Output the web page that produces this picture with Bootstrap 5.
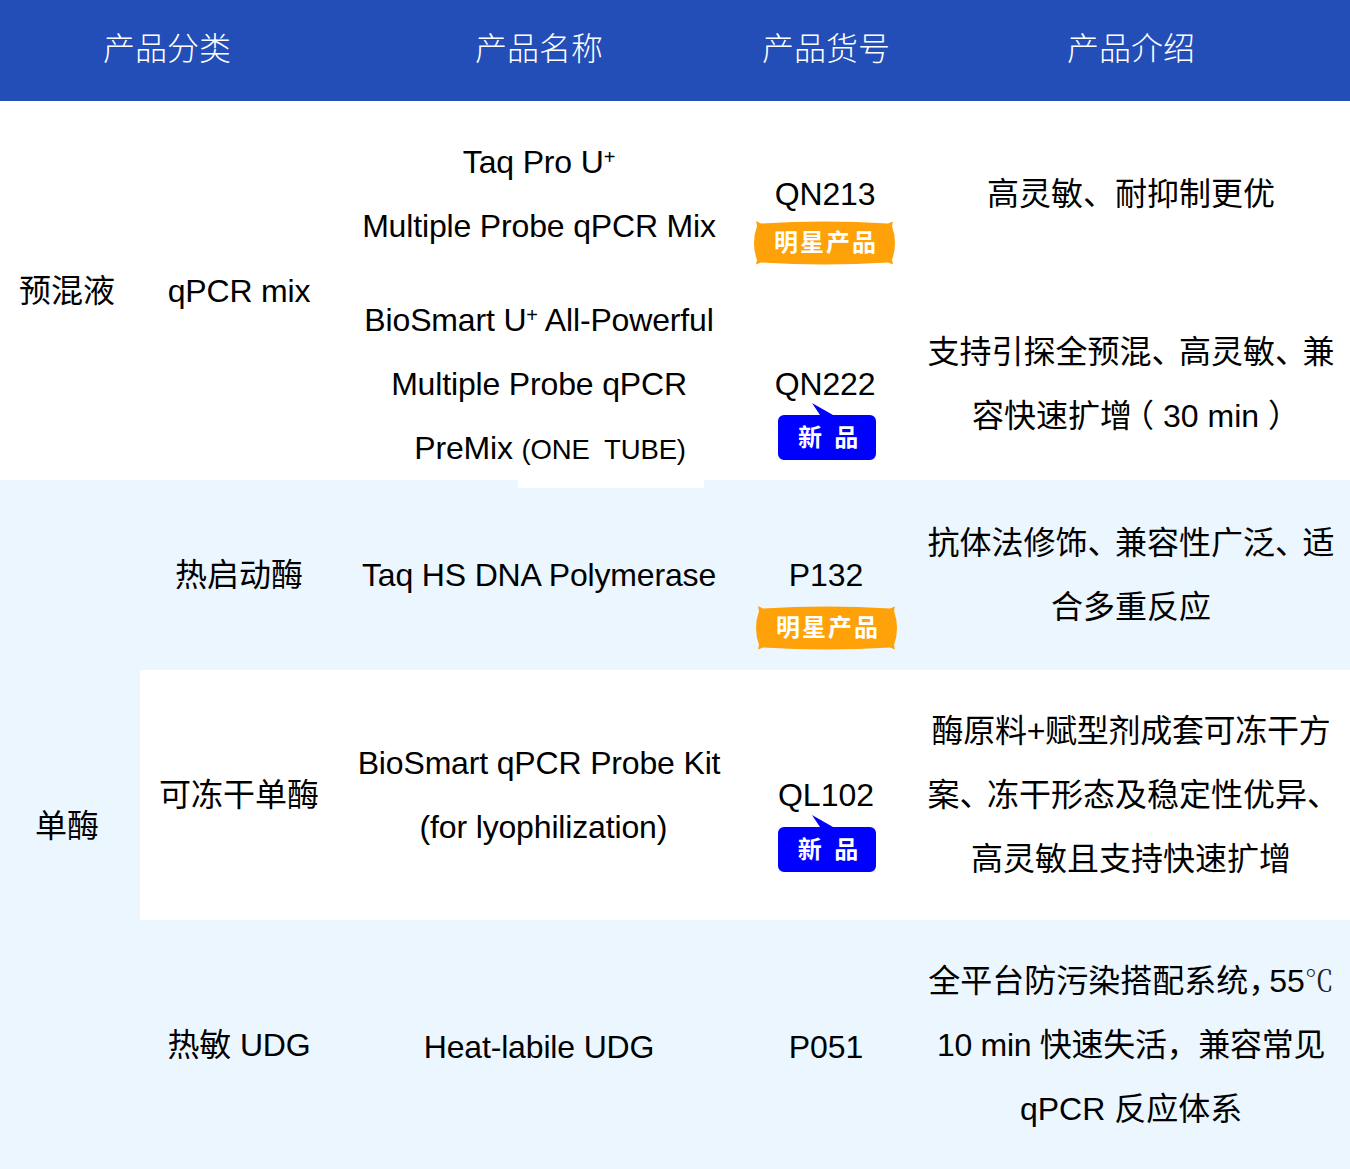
<!DOCTYPE html>
<html lang="zh">
<head>
<meta charset="utf-8">
<title>产品列表</title>
<link rel="stylesheet" href="https://cdn.jsdelivr.net/npm/bootstrap@5.3.0/dist/css/bootstrap.min.css">
<style>
html,body{margin:0;background:#fff}
body{font-family:"Liberation Sans","Noto Sans CJK SC",sans-serif;color:#000}
.ptable{table-layout:fixed;width:1350px;border-collapse:collapse;font-size:32px;line-height:64px}
.ptable td,.ptable th{padding:0;text-align:center;vertical-align:middle;position:relative}
.ptable th{background:#234eb8;color:#fff;font-weight:300;height:101px;padding-bottom:4px}
.ptable th.hd1{padding-right:4px}
.ptable td.first{padding-right:6px}
.ptable td.down1{padding-top:2px}
.ptable td.down2{padding-top:4px}
.ptable td.left1{padding-right:2px}
.c1{width:140px}.c2{width:198px}.c3{width:402px}.c4{width:172px}.c5{width:438px}
.r1a td{height:186px}.r1b td{height:193px}.r2 td{height:190px}.r3 td{height:250px}.r4 td{height:249px}
.tint{background:#ebf6ff}
.blank{background:#fff}
.ptable td.lat{letter-spacing:-.16px}
.sup{font-size:20px;vertical-align:9px;line-height:0}
.small-latin{font-size:27.5px;line-height:0}
.premix{margin-left:22px}
.ledge::after{content:"";position:absolute;left:180px;top:100%;width:186px;height:8px;background:#fff;z-index:2}
.celsius{font-family:"Liberation Serif","Noto Serif CJK SC",serif;font-size:29px;line-height:0;color:#222}
.cm{letter-spacing:-4.5px}
.cmfull{letter-spacing:-11px}
.pl{font-feature-settings:"halt";margin-left:6px}
.pr{font-feature-settings:"halt";margin-right:6px}
.tight{letter-spacing:-.3px}
.tagstar,.tagnew{position:absolute;display:flex;align-items:center;justify-content:center;color:#fff;font-weight:700;line-height:1;z-index:3}
.tagstar{width:141px;height:44px;font-size:24px;letter-spacing:2px;padding-left:3px}
.tagstar svg,.tagnew svg{position:absolute;left:0;top:0}
.tagstar svg{overflow:visible}
.tagstar span,.tagnew span{position:relative}
.tagnew{width:98px;height:57px;padding-top:13px;padding-left:2px;font-size:24px;white-space:pre;word-spacing:6px}
.at-a{left:14px;top:120px}
.at-b{left:16px;top:126px}
.at-c{left:38px;top:116px}
.at-d{left:38px;top:145px}
</style>
</head>
<body>
<table class="ptable">
<colgroup><col class="c1"><col class="c2"><col class="c3"><col class="c4"><col class="c5"></colgroup>
<thead>
<tr><th colspan="2" class="hd1">产品分类</th><th>产品名称</th><th>产品货号</th><th>产品介绍</th></tr>
</thead>
<tbody>
<tr class="r1a">
<td rowspan="2" class="first">预混液</td>
<td rowspan="2" class="lat">qPCR mix</td>
<td class="lat">Taq Pro U<span class="sup">+</span><br>Multiple Probe qPCR Mix</td>
<td class="lat left1">QN213
<div class="tagstar at-a"><svg width="141" height="44" viewBox="0 0 141 44"><path d="M2 0L7 2.5Q70-1.5 134 2.5L139 .5L138 5Q144 22 138 39L139 43.5L134 41.5Q70 45.5 7 41.5L2 43.5L3 39Q-3 22 3 5Z" fill="#ffa108"/></svg><span>明星产品</span></div></td>
<td>高灵敏、耐抑制更优</td>
</tr>
<tr class="r1b">
<td class="ledge lat">BioSmart U<span class="sup">+</span> All-Powerful<br>Multiple Probe qPCR<br><span class="premix">PreMix</span> <span class="small-latin">(ONE&nbsp; TUBE)</span></td>
<td class="lat left1">QN222
<div class="tagnew at-c"><svg width="98" height="57" viewBox="0 0 98 57"><path d="M34 0L55 12H92a6 6 0 0 1 6 6V51a6 6 0 0 1-6 6H6a6 6 0 0 1-6-6V18a6 6 0 0 1 6-6H42Z" fill="#0000fe"/></svg><span>新 品</span></div></td>
<td>支持引探全预混<span class="cm">、</span>高灵敏<span class="cm">、</span>兼<br>容快速扩增<span class="pl">（</span> 30 min <span class="pr">）</span></td>
</tr>
<tr class="r2 tint">
<td rowspan="3" class="tint first down1">单酶</td>
<td>热启动酶</td>
<td class="lat">Taq HS DNA Polymerase</td>
<td>P132
<div class="tagstar at-b"><svg width="141" height="44" viewBox="0 0 141 44"><path d="M2 0L7 2.5Q70-1.5 134 2.5L139 .5L138 5Q144 22 138 39L139 43.5L134 41.5Q70 45.5 7 41.5L2 43.5L3 39Q-3 22 3 5Z" fill="#ffa108"/></svg><span>明星产品</span></div></td>
<td>抗体法修饰<span class="cm">、</span>兼容性广泛<span class="cm">、</span>适<br>合多重反应</td>
</tr>
<tr class="r3 blank">
<td>可冻干单酶</td>
<td class="lat">BioSmart qPCR Probe Kit<br>&nbsp;(for lyophilization)</td>
<td>QL102
<div class="tagnew at-d"><svg width="98" height="57" viewBox="0 0 98 57"><path d="M34 0L55 12H92a6 6 0 0 1 6 6V51a6 6 0 0 1-6 6H6a6 6 0 0 1-6-6V18a6 6 0 0 1 6-6H42Z" fill="#0000fe"/></svg><span>新 品</span></div></td>
<td><span class="tight">酶原料+赋型剂成套可冻干方</span><br>案<span class="cm">、</span>冻干形态及稳定性优异<span class="cm">、</span><br>高灵敏且支持快速扩增</td>
</tr>
<tr class="r4 tint">
<td class="lat">热敏 UDG</td>
<td class="lat down2">Heat-labile UDG</td>
<td class="down2">P051</td>
<td>全平台防污染搭配系统<span class="cmfull">，</span>55<span class="celsius">℃</span><br><span class="tight">10 min 快速失活，兼容常见</span><br>qPCR 反应体系</td>
</tr>
</tbody>
</table>
</body>
</html>
